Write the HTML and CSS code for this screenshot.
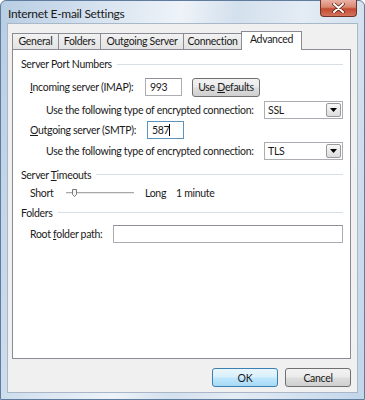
FILE: index.html
```html
<!DOCTYPE html>
<html lang="en">

<head>
    <meta charset="UTF-8">
    <meta name="viewport" content="width=device-width, initial-scale=1.0">
    <title>Internet E-mail Settings</title>
    <link rel="stylesheet" href="styles.css">
</head>

<body>
    <div class="window">
        <div class="titlebar">
            <span class="title">Internet E-mail Settings</span>
            <div class="close-btn">
                <svg width="13" height="10" viewBox="0 0 13 10">
                    <path d="M2 1 L11 9 M11 1 L2 9" stroke="#5a1a10" stroke-width="3.4" stroke-linecap="round"/>
                    <path d="M2 1 L11 9 M11 1 L2 9" stroke="#ffffff" stroke-width="2" stroke-linecap="round"/>
                </svg>
            </div>
        </div>

        <div class="client">
            <div class="tabs">
                <div class="tab tab-general">General</div>
                <div class="tab tab-folders">Folders</div>
                <div class="tab tab-outgoing">Outgoing Server</div>
                <div class="tab tab-connection">Connection</div>
                <div class="tab tab-advanced active">Advanced</div>
            </div>

            <div class="panel">
                <div class="group-title g-ports"><span>Server Port Numbers</span></div>

                <div class="row r-incoming">
                    <label class="lbl lbl-in"><u>I</u>ncoming server (IMAP):</label>
                    <div class="textbox port">993</div>
                    <div class="btn btn-defaults"><span>Use <u>D</u>efaults</span></div>
                </div>
                <div class="row r-enc1 indent">
                    <label class="lbl lbl-enc">Use the following type of encrypted connection:</label>
                    <div class="select">
                        <span>SSL</span>
                        <div class="drop"><svg width="7" height="4" viewBox="0 0 7 4"><path d="M0 0 H7 L3.5 4 Z" fill="#000"/></svg></div>
                    </div>
                </div>
                <div class="row r-outgoing">
                    <label class="lbl lbl-out"><u>O</u>utgoing server (SMTP):</label>
                    <div class="textbox port focused">587<span class="caret"></span></div>
                </div>
                <div class="row r-enc2 indent">
                    <label class="lbl lbl-enc">Use the following type of encrypted connection:</label>
                    <div class="select">
                        <span>TLS</span>
                        <div class="drop"><svg width="7" height="4" viewBox="0 0 7 4"><path d="M0 0 H7 L3.5 4 Z" fill="#000"/></svg></div>
                    </div>
                </div>

                <div class="group-title g-timeouts"><span>Server <u>T</u>imeouts</span></div>
                <div class="row r-slider">
                    <span class="lbl lbl-short">Short</span>
                    <svg class="slider" width="70" height="10" viewBox="0 0 70 10">
                        <line x1="0" y1="4.5" x2="68" y2="4.5" stroke="#a7a7a7" stroke-width="1"/>
                        <line x1="0" y1="5.5" x2="68" y2="5.5" stroke="#e8e8e8" stroke-width="1"/>
                        <path d="M6.5 1.5 H10.5 V6.5 L8.5 8.5 L6.5 6.5 Z" fill="#f4f4f4" stroke="#7a7a7a" stroke-width="1"/>
                    </svg>
                    <span class="lbl lbl-long">Long</span>
                    <span class="lbl">1 minute</span>
                </div>

                <div class="group-title g-folders"><span>Folders</span></div>
                <div class="row r-root">
                    <label class="lbl lbl-root">Root <u>f</u>older path:</label>
                    <div class="textbox root"></div>
                </div>
            </div>

            <div class="footer">
                <div class="btn btn-ok">OK</div>
                <div class="btn btn-cancel">Cancel</div>
            </div>
        </div>
    </div>
</body>

</html>
```

FILE: styles.css
```css
body{
    margin: 0;
    font-family: Lato, "Noto Sans", sans-serif;
    font-size: 10.5px;
    letter-spacing: -0.3px;
    color: #1a1a1a;
}

.window{
    position: relative;
    width: 365px;
    height: 400px;
    box-sizing: border-box;
    border: 1px solid #5f7c9e;
    border-radius: 6px 6px 0 0;
    padding: 0 6px 6px 6px;
    display: flex;
    flex-direction: column;
    background: linear-gradient(100deg, #b8cde3 0%, #d9e5f1 25%, #eef3f8 42%, #d3e0ed 55%, #e4ecf4 70%, #c2d6ea 100%);
}

.titlebar{
    height: 22px;
    display: flex;
    align-items: center;
}

.title{
    margin-left: 1px;
    font-size: 12px;
    letter-spacing: -0.3px;
    padding-top: 2px;
}

.close-btn{
    position: absolute;
    top: -1px;
    right: 7px;
    width: 37px;
    height: 17px;
    box-sizing: border-box;
    border: 1px solid #70332a;
    border-top: none;
    border-radius: 0 0 4px 4px;
    background: linear-gradient(#eab2a4 0%, #d98670 45%, #c24b32 55%, #d4735c 100%);
    display: flex;
    align-items: center;
    justify-content: center;
}

.client{
    flex: 1;
    background-color: #f0f0f0;
    border: 1px solid #a9b8c8;
    padding: 7px 6px 0 4px;
    display: flex;
    flex-direction: column;
}

/* tab strip */
.tabs{
    display: flex;
    align-items: flex-end;
    height: 18px;
    position: relative;
    z-index: 2;
}

.tab{
    height: 16px;
    box-sizing: border-box;
    border: 1px solid #898c95;
    border-bottom: none;
    margin-left: -1px;
    background: linear-gradient(#f2f2f2, #e3e3e3);
    text-align: center;
    line-height: 15px;
    white-space: nowrap;
}

.tab-general{ width: 47px; margin-left: 0; }
.tab-folders{ width: 43px; }
.tab-outgoing{ width: 84px; }
.tab-connection{ width: 59px; }

.tab.active{
    width: 61px;
    height: 19px;
    margin-bottom: -1px;
    background: #fff;
    line-height: 15px;
}

.panel{
    width: 339px;
    height: 310px;
    box-sizing: border-box;
    border: 1px solid #898c95;
    background: #fff;
    padding: 4px 7px 0 8px;
}

/* group captions with rule */
.group-title{
    display: flex;
    align-items: center;
    height: 20px;
}

.group-title::after{
    content: "";
    flex: 1;
    height: 1px;
    background: #d5dfe5;
    margin-left: 5px;
}

.g-timeouts{ margin-top: 5px; height: 19px; }
.g-folders{ margin-top: 1px; height: 19px; }

.row{
    display: flex;
    align-items: center;
    height: 18px;
    padding-left: 9px;
}

.row.indent{ padding-left: 25px; }

.r-incoming{ margin-top: 4px; }
.r-enc1{ margin-top: 5px; }
.r-outgoing{ margin-top: 2px; }
.r-enc2{ margin-top: 3px; }
.r-root{ margin-top: 3px; }

.lbl{ white-space: nowrap; }
.lbl-in{ width: 115px; }
.lbl-out{ width: 117px; }
.lbl-enc{ width: 218px; }
.lbl-root{ width: 83px; }
.lbl-short{ width: 36px; }
.lbl-long{ width: 31px; margin-left: 9px; }

.textbox{
    height: 18px;
    box-sizing: border-box;
    border: 1px solid #abadb3;
    border-top-color: #8e9198;
    background: #fff;
    padding: 0 4px;
    line-height: 16px;
    display: flex;
    align-items: center;
}

.textbox.port{ width: 37px; }
.textbox.root{ width: 230px; }
.textbox.focused{ border-color: #5c93bc; }

.caret{
    display: inline-block;
    width: 1px;
    height: 12px;
    background: #000;
}

.select{
    width: 79px;
    height: 18px;
    box-sizing: border-box;
    border: 1px solid #abadb3;
    background: #fff;
    display: flex;
    align-items: center;
    justify-content: space-between;
    padding: 0 1px 0 3px;
}

.drop{
    width: 15px;
    height: 14px;
    box-sizing: border-box;
    border: 1px solid #9a9a9a;
    border-radius: 2px;
    background: linear-gradient(#f8f8f8, #dcdcdc);
    display: flex;
    align-items: center;
    justify-content: center;
}

.btn{
    height: 19px;
    box-sizing: border-box;
    border: 1px solid #707070;
    border-radius: 3px;
    background: linear-gradient(#f2f2f2 0%, #ebebeb 45%, #dddddd 55%, #cfcfcf 100%);
    display: flex;
    align-items: center;
    justify-content: center;
}

.btn-defaults{
    width: 68px;
    margin-left: 10px;
}

.footer{
    display: flex;
    justify-content: flex-end;
    gap: 7px;
    margin-top: 9px;
    width: 339px;
}

.btn-ok, .btn-cancel{ width: 66px; }

.btn-ok{
    border-color: #3c7fb1;
    background: linear-gradient(#eaf6fd 0%, #d9f0fc 45%, #bee6fd 55%, #a7d9f5 100%);
}
```
